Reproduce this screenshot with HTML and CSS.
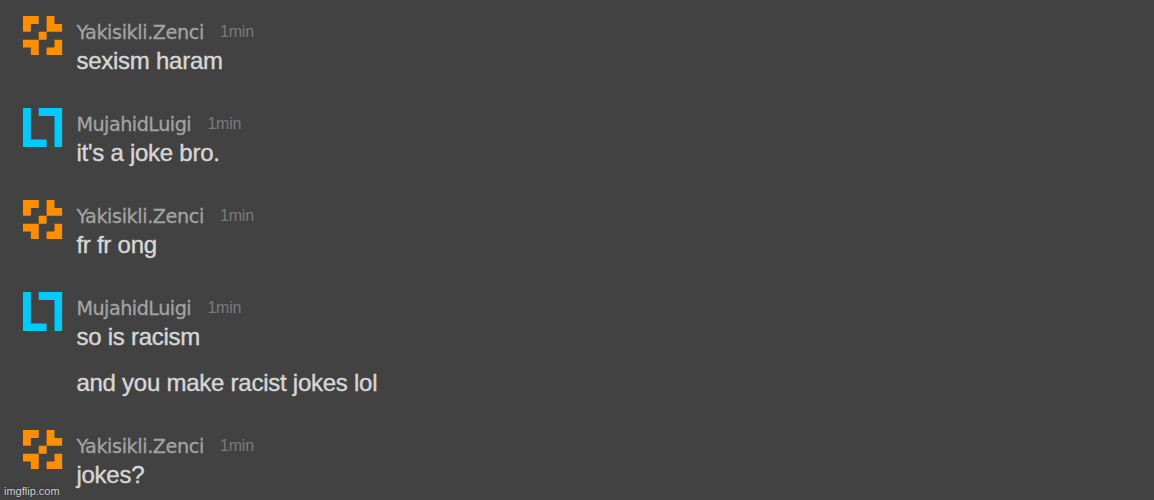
FILE: index.html
```html
<!DOCTYPE html>
<html lang="en">
<head>
<meta charset="utf-8">
<title>Chat</title>
<link rel="stylesheet" href="styles.css">
</head>
<body>
<svg class="defs" width="0" height="0" aria-hidden="true">
  <symbol id="orange" viewBox="0 0 5 5"><path fill="#ff8f00" d="M0 0h2v1H1v1H0zM3 0h1v1h1v1H3zM2 2h1v1H2zM0 3h2v2H1V4H0zM4 3h1v2H3V4h1z"/></symbol>
  <symbol id="cyan" viewBox="0 0 5 5"><path fill="#00cbfb" d="M0 0h1v4h2v1H0zM2 0h3v5H4V1H2z"/></symbol>
</svg>
<main class="chat">
  <article class="post">
    <svg class="avatar"><use href="#orange"/></svg>
    <div class="body">
      <header class="head"><span class="name">Yakisikli.Zenci</span><time class="time">1min</time></header>
      <p class="text">sexism haram</p>
    </div>
  </article>
  <article class="post">
    <svg class="avatar"><use href="#cyan"/></svg>
    <div class="body">
      <header class="head"><span class="name name-luigi">MujahidLuigi</span><time class="time">1min</time></header>
      <p class="text">it's a joke bro.</p>
    </div>
  </article>
  <article class="post">
    <svg class="avatar"><use href="#orange"/></svg>
    <div class="body">
      <header class="head"><span class="name">Yakisikli.Zenci</span><time class="time">1min</time></header>
      <p class="text">fr fr ong</p>
    </div>
  </article>
  <article class="post">
    <svg class="avatar"><use href="#cyan"/></svg>
    <div class="body">
      <header class="head"><span class="name name-luigi">MujahidLuigi</span><time class="time">1min</time></header>
      <p class="text">so is racism</p>
      <p class="text">and you make racist jokes lol</p>
    </div>
  </article>
  <article class="post">
    <svg class="avatar"><use href="#orange"/></svg>
    <div class="body">
      <header class="head"><span class="name">Yakisikli.Zenci</span><time class="time">1min</time></header>
      <p class="text">jokes?</p>
    </div>
  </article>
</main>
<div class="watermark">imgflip.com</div>
</body>
</html>
```
FILE: styles.css
```css
body {
  margin: 0;
  height: 500px;
  overflow: hidden;
  background: #424242;
  font-family: "Liberation Sans", Arial, sans-serif;
}
.defs { position: absolute; }
.chat {
  display: flex;
  flex-direction: column;
  gap: 32.1px;
  padding: 15px 23.2px 0;
}
.post {
  display: flex;
  gap: 13.8px;
}
.avatar {
  flex: none;
  width: 39.4px;
  height: 39.4px;
  margin-top: 0.5px;
}
.body { display: flex; flex-direction: column; }
.head {
  display: flex;
  align-items: flex-start;
  gap: 16.2px;
  height: 30px;
  line-height: 33px;
  white-space: nowrap;
}
.name {
  font-family: "DejaVu Sans", Verdana, sans-serif;
  font-size: 19.2px;
  line-height: 35px;
  letter-spacing: -0.4px;
  color: #a3a3a3;
  -webkit-text-stroke: 0.3px #a3a3a3;
}
.name-luigi { letter-spacing: -0.5px; }
.time {
  font-size: 16px;
  letter-spacing: -0.2px;
  color: #7a7a7a;
}
.text {
  margin: 0;
  height: 30px;
  line-height: 31px;
  font-size: 24px;
  letter-spacing: -0.25px;
  color: #d6d6d6;
  -webkit-text-stroke: 0.4px #d6d6d6;
  white-space: nowrap;
}
.text + .text { margin-top: 15.9px; }
.watermark {
  position: absolute;
  left: 4px;
  bottom: 2px;
  font-size: 11px;
  line-height: 13px;
  color: #d0d0d0;
  text-shadow: 0 0 2px #222;
}
```
